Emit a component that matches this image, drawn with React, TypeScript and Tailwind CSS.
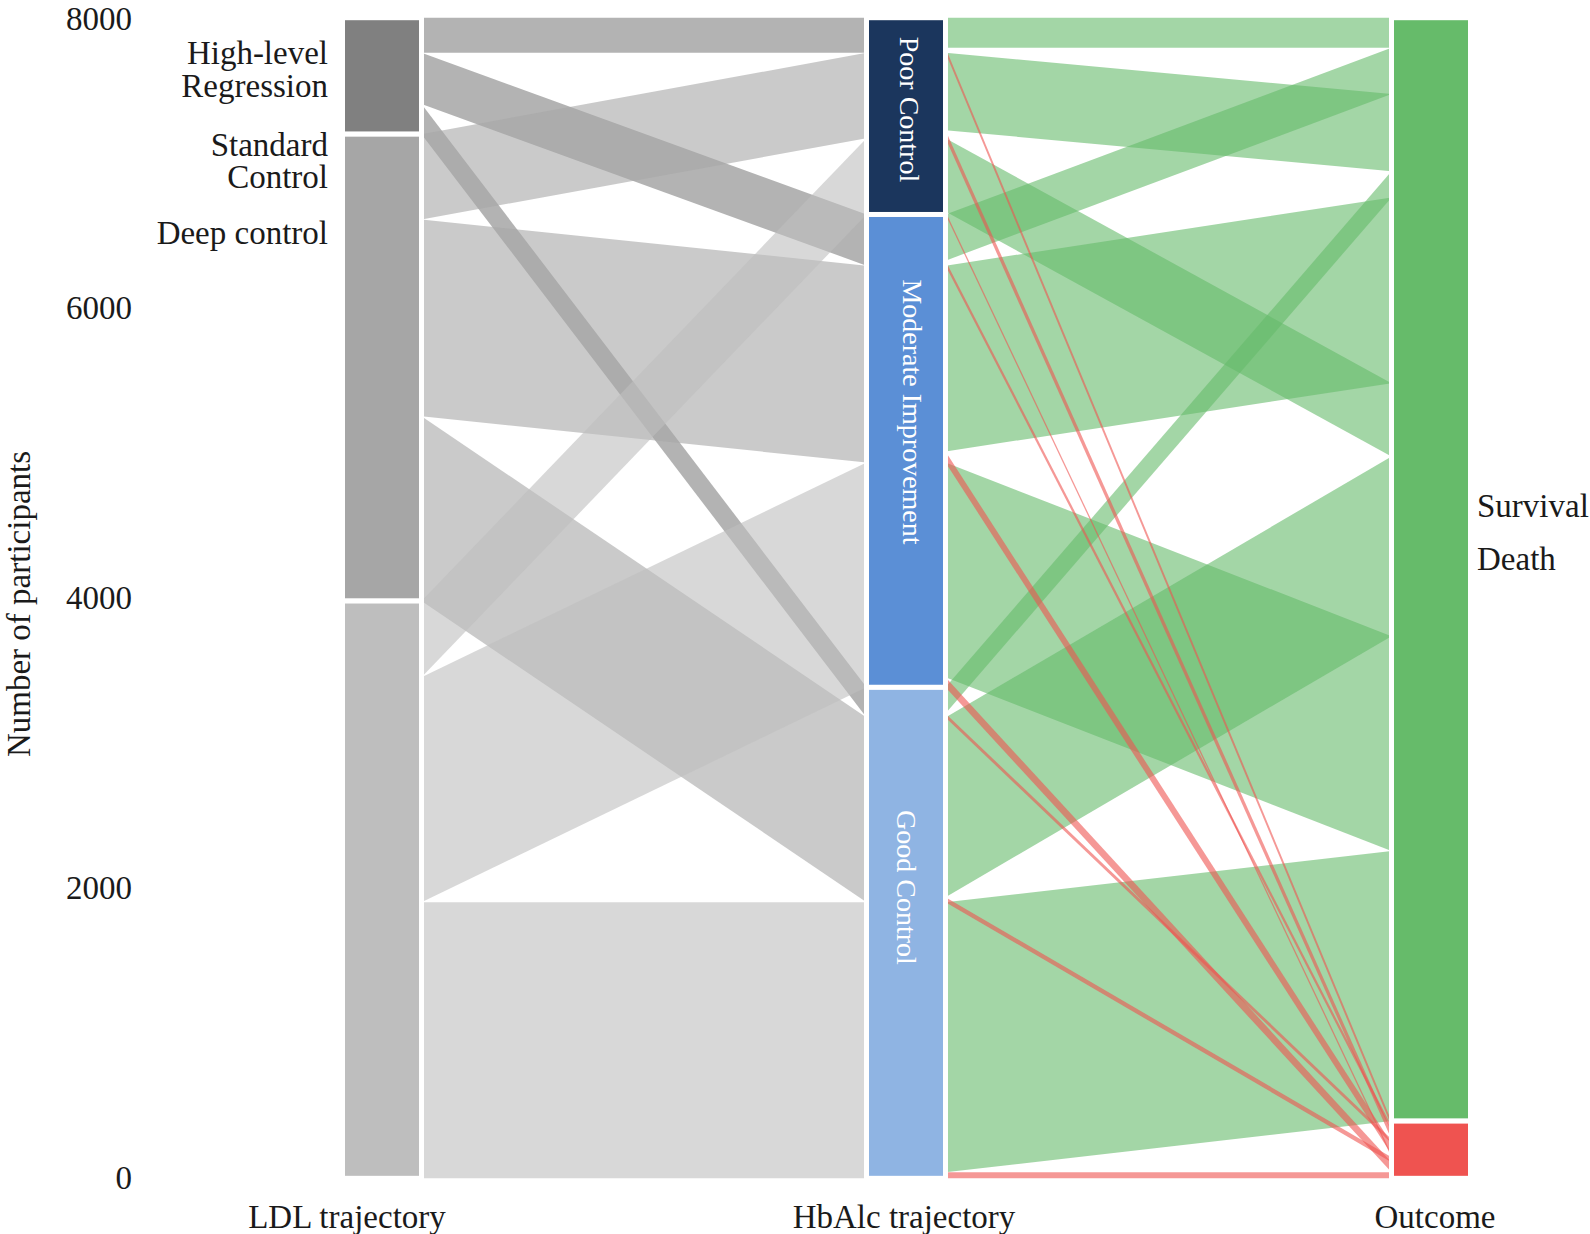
import React from "react";

type Pair = [number, number];

const Y0 = 17.7;
const K = 1.004;
const y = (v: number) => Y0 + v * K;

const LDL = ["H", "S", "D"] as const;
const HB = ["P", "M", "G"] as const;

// [survival, death] in chart units
const DATA: Record<string, Pair> = {
  "H-P": [30, 5],
  "H-M": [46, 5],
  "H-G": [26, 4],
  "S-P": [77, 8],
  "S-M": [185, 11],
  "S-G": [179, 5],
  "D-P": [73, 3],
  "D-M": [214, 10],
  "D-G": [269, 6],
};

const OUT_ORDER = ["H-P", "H-M", "S-P", "H-G", "S-M", "D-P", "S-G", "D-M", "D-G"];

const LDL_FILL: Record<string, string> = { H: "#808080", S: "#a6a6a6", D: "#bebebe" };

function build() {
  const leftA: Record<string, Pair> = {};
  let c = 0;
  for (const l of LDL)
    for (const h of HB) {
      const [s, d] = DATA[`${l}-${h}`];
      leftA[`${l}-${h}`] = [c, c + s + d];
      c += s + d;
    }
  const leftB: Record<string, Pair> = {};
  const survB: Record<string, Pair> = {};
  const deathB: Record<string, Pair> = {};
  const hbTot: Record<string, Pair> = {};
  c = 0;
  for (const h of HB) {
    const start = c;
    for (const l of LDL) {
      const k = `${l}-${h}`;
      const [s, d] = DATA[k];
      leftB[k] = [c, c + s + d];
      survB[k] = [c, c + s];
      deathB[k] = [c + s, c + s + d];
      c += s + d;
    }
    hbTot[h] = [start, c];
  }
  const survC: Record<string, Pair> = {};
  const deathC: Record<string, Pair> = {};
  c = 0;
  for (const k of OUT_ORDER) {
    survC[k] = [c, c + DATA[k][0]];
    c += DATA[k][0];
  }
  const survEnd = c;
  for (const k of OUT_ORDER) {
    deathC[k] = [c, c + DATA[k][1]];
    c += DATA[k][1];
  }
  const ldlTot: Record<string, Pair> = {};
  c = 0;
  for (const l of LDL) {
    const start = c;
    for (const h of HB) {
      const [s, d] = DATA[`${l}-${h}`];
      c += s + d;
    }
    ldlTot[l] = [start, c];
  }
  return { leftA, leftB, survB, deathB, survC, deathC, hbTot, ldlTot, survEnd, total: c };
}

const quad = (x1: number, x2: number, a: Pair, b: Pair) =>
  `${x1},${y(a[0])} ${x2},${y(b[0])} ${x2},${y(b[1])} ${x1},${y(a[1])}`;

const AX1 = 342.5;
const AX2 = 866.5;
const AX3 = 1391.5;
const W = 79;

export default function App() {
  const g = build();
  const ticks = [0, 2000, 4000, 6000, 8000];
  const tickY = (v: number) => 1177.5 - v * 0.144875 + 11.2;

  const strata: { x: number; a: number; b: number; fill: string }[] = [
    { x: AX1, a: g.ldlTot.H[0], b: g.ldlTot.H[1], fill: "#808080" },
    { x: AX1, a: g.ldlTot.S[0], b: g.ldlTot.S[1], fill: "#a6a6a6" },
    { x: AX1, a: g.ldlTot.D[0], b: g.ldlTot.D[1], fill: "#bebebe" },
    { x: AX2, a: g.hbTot.P[0], b: g.hbTot.P[1], fill: "#1b365d" },
    { x: AX2, a: g.hbTot.M[0], b: g.hbTot.M[1], fill: "#5b8fd6" },
    { x: AX2, a: g.hbTot.G[0], b: g.hbTot.G[1], fill: "#8fb4e3" },
    { x: AX3, a: 0, b: g.survEnd, fill: "#66bb6a" },
    { x: AX3, a: g.survEnd, b: g.total, fill: "#ef5350" },
  ];

  return (
    <div className="w-[1590px] h-[1234px] bg-white font-['Liberation_Serif',serif] text-[#1a1a1a]">
      <svg width={1590} height={1234} viewBox="0 0 1590 1234" className="block">
        {/* LDL -> HbA1c flows */}
        {LDL.map((l) =>
          HB.map((h) => {
            const k = `${l}-${h}`;
            return (
              <polygon
                key={k}
                points={quad(AX1 + W, AX2, g.leftA[k], g.leftB[k])}
                fill={LDL_FILL[l]}
                fillOpacity={0.6}
              />
            );
          })
        )}
        {/* HbA1c -> Outcome flows: survival */}
        {HB.map((h) =>
          LDL.map((l) => {
            const k = `${l}-${h}`;
            return (
              <polygon
                key={`s-${k}`}
                points={quad(AX2 + W, AX3, g.survB[k], g.survC[k])}
                fill="#66bb6a"
                fillOpacity={0.6}
              />
            );
          })
        )}
        {/* death */}
        {HB.map((h) =>
          LDL.map((l) => {
            const k = `${l}-${h}`;
            return (
              <polygon
                key={`d-${k}`}
                points={quad(AX2 + W, AX3, g.deathB[k], g.deathC[k])}
                fill="#ef5350"
                fillOpacity={0.6}
              />
            );
          })
        )}
        {/* strata */}
        {strata.map((s, i) => (
          <rect
            key={i}
            x={s.x}
            y={y(s.a)}
            width={W}
            height={(s.b - s.a) * K}
            fill={s.fill}
            stroke="#ffffff"
            strokeWidth={5}
          />
        ))}

        {/* stratum labels (rotated) */}
        <g fill="#ffffff" fontSize={28}>
          <text transform="translate(900,109.5) rotate(90)" textAnchor="middle">
            Poor Control
          </text>
          <text transform="translate(903,412) rotate(90)" textAnchor="middle">
            Moderate Improvement
          </text>
          <text transform="translate(897,887.5) rotate(90)" textAnchor="middle">
            Good Control
          </text>
        </g>

        <g fill="#1a1a1a" fontSize={33}>
          {ticks.map((t) => (
            <text key={t} x={132} y={tickY(t)} textAnchor="end">
              {t}
            </text>
          ))}
          <text transform="translate(30,604) rotate(-90)" textAnchor="middle">
            Number of participants
          </text>
          <text x={328} y={64} textAnchor="end">High-level</text>
          <text x={328} y={96.5} textAnchor="end">Regression</text>
          <text x={328} y={155.5} textAnchor="end">Standard</text>
          <text x={328} y={188} textAnchor="end">Control</text>
          <text x={328} y={244} textAnchor="end">Deep control</text>
          <text x={1477} y={517}>Survival</text>
          <text x={1477} y={570}>Death</text>
          <text x={347} y={1228} textAnchor="middle">LDL trajectory</text>
          <text x={904} y={1228} textAnchor="middle">HbAlc trajectory</text>
          <text x={1435} y={1228} textAnchor="middle">Outcome</text>
        </g>
      </svg>
    </div>
  );
}
